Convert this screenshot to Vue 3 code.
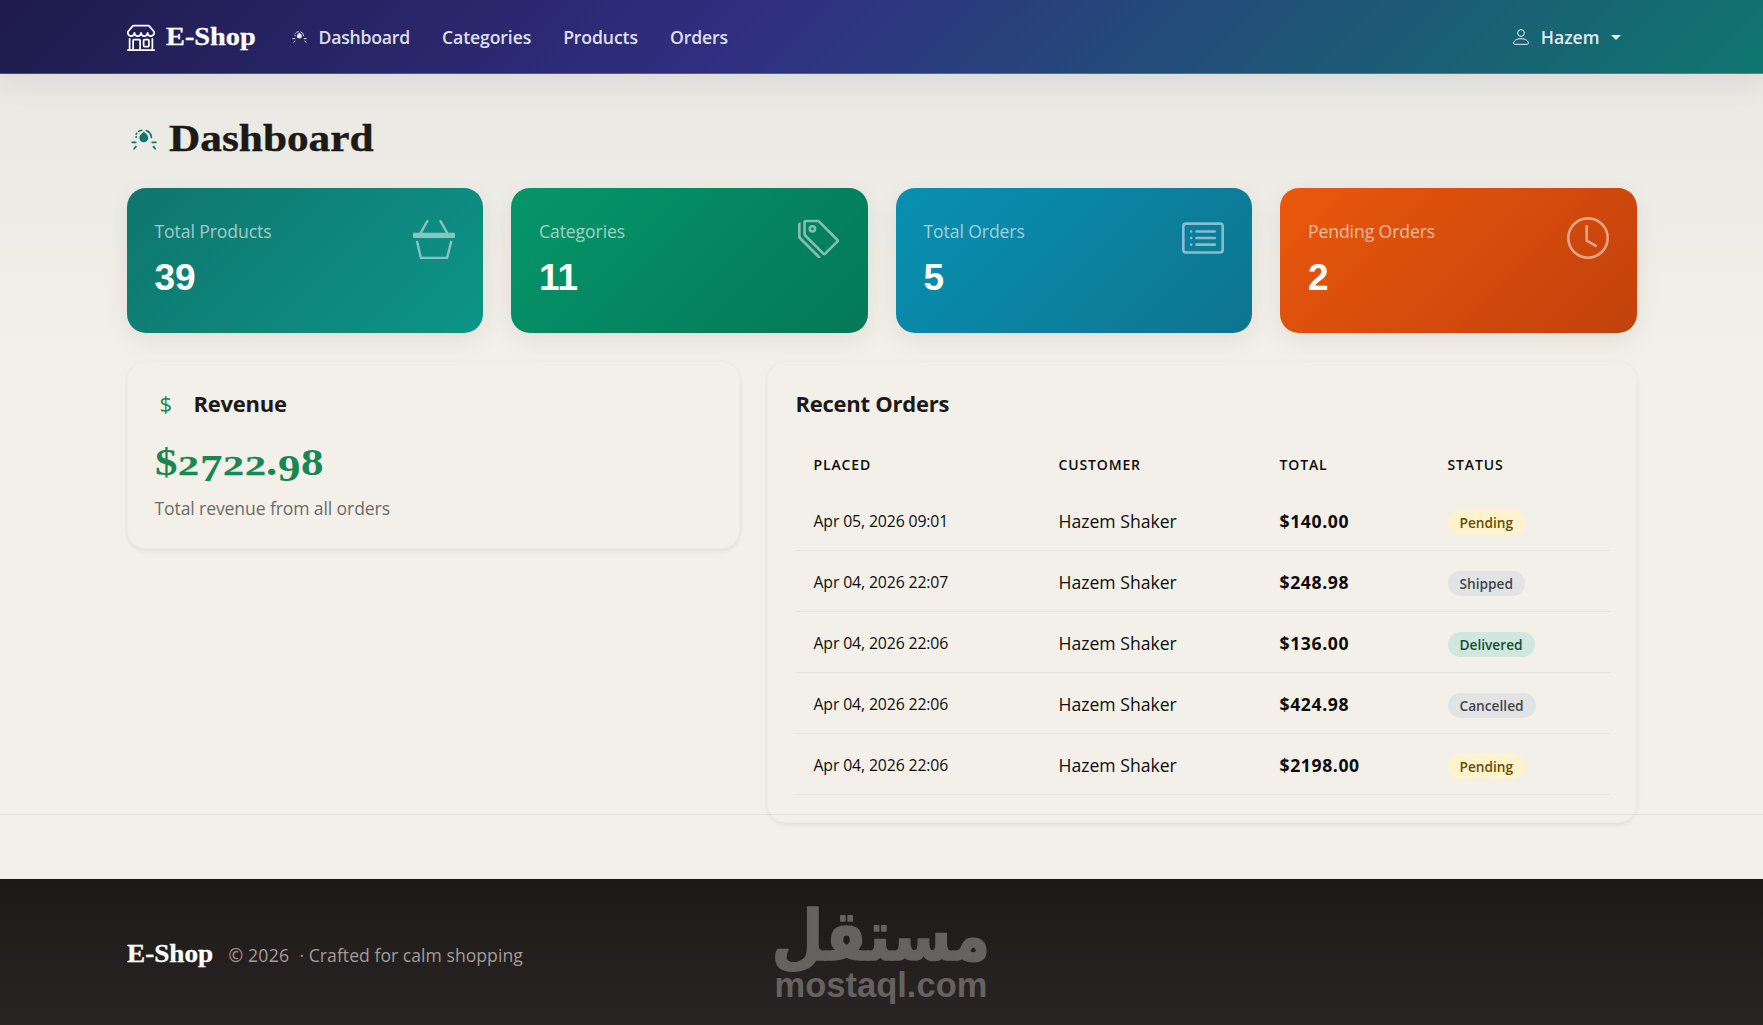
<template>
  <div class="page">
    <header class="navbar">
      <div class="container navbar__inner">
        <a class="brand" href="#">
          <svg class="brand__icon" viewBox="0 0 16 16" fill="currentColor">
            <path d="M2.97 1.35A1 1 0 0 1 3.73 1h8.54a1 1 0 0 1 .76.35l2.609 3.044A1.5 1.5 0 0 1 16 5.37v.255a2.375 2.375 0 0 1-4.25 1.458A2.371 2.371 0 0 1 9.875 8 2.37 2.37 0 0 1 8 7.083 2.37 2.37 0 0 1 6.125 8a2.37 2.37 0 0 1-1.875-.917A2.375 2.375 0 0 1 0 5.625V5.37a1.5 1.5 0 0 1 .361-.976zm1.78 4.275a1.375 1.375 0 0 0 2.75 0 .5.5 0 0 1 1 0 1.375 1.375 0 0 0 2.75 0 .5.5 0 0 1 1 0 1.375 1.375 0 1 0 2.75 0V5.37a.5.5 0 0 0-.12-.325L12.27 2H3.73L1.12 5.045A.5.5 0 0 0 1 5.37v.255a1.375 1.375 0 0 0 2.75 0 .5.5 0 0 1 1 0M1.5 8.5A.5.5 0 0 1 2 9v6h1v-5a1 1 0 0 1 1-1h3a1 1 0 0 1 1 1v5h6V9a.5.5 0 0 1 1 0v6h.5a.5.5 0 0 1 0 1H.5a.5.5 0 0 1 0-1H1V9a.5.5 0 0 1 .5-.5M4 15h3v-5H4zm5-5a1 1 0 0 1 1-1h2a1 1 0 0 1 1 1v3a1 1 0 0 1-1 1h-2a1 1 0 0 1-1-1zm3 0h-2v3h2z" />
          </svg>
          <span class="brand__name">E-Shop</span>
        </a>

        <nav class="nav">
          <a v-for="link in links" :key="link.label" class="nav__link" href="#">
            <svg v-if="link.icon" class="nav__icon" viewBox="0 0 26 21">
              <g fill="none" stroke="currentColor" stroke-width="1.7" stroke-linecap="round">
                <path d="M5.2 8.2v-.6M5.2 5l.6-.7M7.8 2.2l2.8-.9M15.4 1.6a8 8 0 0 1 5 6.8M1.2 13.3h3.6M21.2 13.3h3.6M4.9 17.6l-1.8 2.2M22.4 17.6l1.8 2.2" />
              </g>
              <path d="M12.8 2.6c1 1.6 4.4 3 4.4 6.3a4.4 4.4 0 0 1-8.8 0c0-3.3 3.4-4.7 4.4-6.3z" fill="currentColor" />
            </svg>
            <span>{{ link.label }}</span>
          </a>
        </nav>

        <button class="user" type="button">
          <svg class="user__icon" viewBox="0 0 16 16" fill="none" stroke="currentColor">
            <circle cx="8" cy="4" r="3.4" />
            <path d="M.6 14.2C.6 12.2 3 9.7 8 9.7s7.4 2.5 7.4 4.5c0 .7-.4 1.1-1 1.1H1.6c-.6 0-1-.4-1-1.1z" />
          </svg>
          <span>Hazem</span>
          <i class="user__caret"></i>
        </button>
      </div>
    </header>

    <main class="main">
      <div class="container">
        <h1 class="title">
          <svg class="title__icon" viewBox="0 0 26 21">
            <g fill="none" stroke="currentColor" stroke-width="1.7" stroke-linecap="round">
              <path d="M5.2 8.2v-.6M5.2 5l.6-.7M7.8 2.2l2.8-.9M15.4 1.6a8 8 0 0 1 5 6.8M1.2 13.3h3.6M21.2 13.3h3.6M4.9 17.6l-1.8 2.2M22.4 17.6l1.8 2.2" />
            </g>
            <path d="M12.8 2.6c1 1.6 4.4 3 4.4 6.3a4.4 4.4 0 0 1-8.8 0c0-3.3 3.4-4.7 4.4-6.3z" fill="currentColor" />
          </svg>
          <span class="title__text">Dashboard</span>
        </h1>

        <section class="stats">
          <article v-for="stat in stats" :key="stat.label" class="stat" :class="`stat--${stat.icon}`">
            <div>
              <div class="stat__label">{{ stat.label }}</div>
              <div class="stat__value">{{ stat.value }}</div>
            </div>
            <svg v-if="stat.icon === 'basket'" class="stat__icon" viewBox="0 0 16 16" fill="none" stroke="currentColor">
              <path d="M5.5 1.5 2.9 6.2M10.4 1.5 13.1 6.2" stroke-width=".9" stroke-linecap="round" />
              <rect y="6" width="16" height="2" rx=".3" fill="currentColor" stroke="none" />
              <path d="M1.5 9.1 3 15.6h10l1.6-6.5" stroke-width=".9" />
            </svg>
            <svg v-else-if="stat.icon === 'tags'" class="stat__icon" viewBox="0 0 16 16" fill="currentColor">
              <path d="M3 2v4.586l7 7L14.586 9l-7-7zM2 2a1 1 0 0 1 1-1h4.586a1 1 0 0 1 .707.293l7 7a1 1 0 0 1 0 1.414l-4.586 4.586a1 1 0 0 1-1.414 0l-7-7A1 1 0 0 1 2 6.586z" />
              <path d="M5.5 5a.5.5 0 1 1 0-1 .5.5 0 0 1 0 1m0 1a1.5 1.5 0 1 0 0-3 1.5 1.5 0 0 0 0 3M1 7.086a1 1 0 0 0 .293.707L8.75 15.25l-.043.043a1 1 0 0 1-1.414 0l-7-7A1 1 0 0 1 0 7.586V3a1 1 0 0 1 1-1z" />
            </svg>
            <svg v-else-if="stat.icon === 'list'" class="stat__icon" viewBox="0 0 16 16" fill="none" stroke="currentColor">
              <rect x=".5" y="2.5" width="15" height="11" rx="1" />
              <path d="M5.5 5.5h7M5.5 8h7M5.5 10.5h7" stroke-linecap="round" />
              <path d="M3.5 5.5h.01M3.5 8h.01M3.5 10.5h.01" stroke-linecap="round" />
            </svg>
            <svg v-else class="stat__icon" viewBox="0 0 16 16" fill="none" stroke="currentColor">
              <circle cx="8" cy="8" r="7.5" />
              <path d="M7.5 3.5V9l3.5 2" stroke-linecap="round" stroke-linejoin="round" />
            </svg>
          </article>
        </section>

        <section class="panels">
          <article class="panel">
            <h2 class="panel__title">
              <span class="panel__dollar">$</span>
              <span>Revenue</span>
            </h2>
            <div class="revenue">
              <span v-for="(char, i) in revenue" :key="i" class="fig" :class="figures[char]">{{ char }}</span>
            </div>
            <p class="panel__note">Total revenue from all orders</p>
          </article>

          <article class="panel panel--orders">
            <h2 class="panel__title">Recent Orders</h2>
            <table class="orders">
              <colgroup>
                <col class="orders__placed" />
                <col class="orders__customer" />
                <col class="orders__total" />
                <col />
              </colgroup>
              <thead>
                <tr>
                  <th>Placed</th>
                  <th>Customer</th>
                  <th>Total</th>
                  <th>Status</th>
                </tr>
              </thead>
              <tbody>
                <tr v-for="(order, i) in orders" :key="i">
                  <td class="date">{{ order.placed }}</td>
                  <td>{{ order.customer }}</td>
                  <td class="amount">{{ order.total }}</td>
                  <td>
                    <span class="badge" :class="`badge--${order.status.toLowerCase()}`">{{ order.status }}</span>
                  </td>
                </tr>
              </tbody>
            </table>
          </article>
        </section>
      </div>
    </main>

    <footer class="footer">
      <div class="container footer__inner">
        <span class="footer__brand"><span class="footer__name">E-Shop</span></span>
        <span class="footer__year">© 2026</span>
        <span class="footer__text">· Crafted for calm shopping</span>
      </div>
      <svg class="mostaql" viewBox="0 0 216 96">
        <text class="mostaql__ar" transform="translate(108 54) scale(0.88 1.03)" text-anchor="middle">مستقل</text>
        <text class="mostaql__en" x="108" y="91" text-anchor="middle">mostaql.com</text>
      </svg>
    </footer>
  </div>
</template>

<script setup>
const links = [
  { label: 'Dashboard', icon: true },
  { label: 'Categories' },
  { label: 'Products' },
  { label: 'Orders' },
]

const stats = [
  { label: 'Total Products', value: 39, icon: 'basket' },
  { label: 'Categories', value: 11, icon: 'tags' },
  { label: 'Total Orders', value: 5, icon: 'list' },
  { label: 'Pending Orders', value: 2, icon: 'clock' },
]

const revenue = '$2722.98'

// old-style figures: 2 sits at x-height, 7 and 9 drop below the baseline
const figures = {
  2: 'fig--small',
  7: 'fig--low',
  9: 'fig--low',
  '.': 'fig--dot',
}

const orders = [
  { placed: 'Apr 05, 2026 09:01', customer: 'Hazem Shaker', total: '$140.00', status: 'Pending' },
  { placed: 'Apr 04, 2026 22:07', customer: 'Hazem Shaker', total: '$248.98', status: 'Shipped' },
  { placed: 'Apr 04, 2026 22:06', customer: 'Hazem Shaker', total: '$136.00', status: 'Delivered' },
  { placed: 'Apr 04, 2026 22:06', customer: 'Hazem Shaker', total: '$424.98', status: 'Cancelled' },
  { placed: 'Apr 04, 2026 22:06', customer: 'Hazem Shaker', total: '$2198.00', status: 'Pending' },
]
</script>

<style>
body {
  margin: 0;
  background: #f3f0e9;
}
</style>

<style scoped>
.page {
  display: flex;
  flex-direction: column;
  height: 1025px;
  overflow: hidden;
  box-sizing: border-box;
  background: linear-gradient(180deg, #e8e7e3 0, #e9e8e3 74px, #f3f0e9 350px);
  color: #1c1917;
  font-family: "Open Sans", "Noto Sans", sans-serif;
  font-size: 17.6px;
}

.container {
  width: 1510px;
  margin: 0 auto;
}

.navbar {
  position: relative;
  flex: none;
  height: 73px;
  border-bottom: 1px solid rgba(255, 255, 255, 0.2);
  background: linear-gradient(135deg, #1e1b4b 0%, #312e81 42%, #0f766e 100%) border-box;
  box-shadow: 0 8px 32px rgba(28, 25, 23, 0.07);
}

.navbar__inner {
  display: flex;
  align-items: center;
  height: 74px;
}

.brand {
  display: flex;
  align-items: center;
  width: 165px;
  gap: 11px;
  color: #fff;
  text-decoration: none;
}

.brand__icon {
  width: 28px;
  height: 28px;
}

.brand__name {
  font-family: "Liberation Serif", serif;
  font-size: 26px;
  font-weight: 700;
  line-height: 30px;
  transform: scaleX(1.09);
  transform-origin: left;
  -webkit-text-stroke: 0.3px currentColor;
}

.nav {
  display: flex;
  align-items: center;
  flex: 1;
  gap: 32px;
}

.nav__link {
  display: flex;
  align-items: center;
  gap: 12px;
  color: rgba(255, 255, 255, 0.87);
  font-weight: 600;
  letter-spacing: -0.1px;
  text-decoration: none;
}

.nav__link:first-child {
  letter-spacing: -0.2px;
}

.nav__icon {
  width: 15px;
  height: 12px;
}

.user {
  display: flex;
  align-items: center;
  margin-right: 16px;
  padding: 0;
  border: 0;
  background: none;
  color: rgba(255, 255, 255, 0.9);
  font: inherit;
  font-weight: 600;
}

.user__icon {
  width: 16px;
  height: 16px;
  margin-right: 12px;
}

.user__caret {
  margin-left: 11px;
  border: 5.5px solid transparent;
  border-top-color: currentColor;
  border-bottom: 0;
}

.main {
  flex: none;
  height: 740px;
  border-bottom: 1px solid #e4e0d9;
}

.title {
  display: flex;
  align-items: center;
  height: 114px;
  margin: 0;
  padding: 13px 0 0 4px;
  box-sizing: border-box;
  gap: 12px;
  font-family: "Liberation Serif", serif;
  font-size: 38.5px;
  line-height: 50px;
}

.title__icon {
  width: 26px;
  height: 21px;
  margin-top: 4px;
  color: #0f766e;
}

.title__text {
  transform: scaleX(1.125);
  transform-origin: left;
  -webkit-text-stroke: 0.4px currentColor;
}

.stats {
  display: grid;
  grid-template-columns: repeat(4, 1fr);
  gap: 28px;
}

.stat {
  display: flex;
  justify-content: space-between;
  height: 145px;
  padding: 28px;
  box-sizing: border-box;
  border-radius: 19px;
  color: #fff;
  box-shadow: 0 8px 26px rgba(28, 25, 23, 0.07);
}

.stat--basket {
  background: linear-gradient(135deg, #0f766e, #0d9488);
}

.stat--tags {
  background: linear-gradient(135deg, #059669, #047857);
}

.stat--list {
  background: linear-gradient(135deg, #0891b2, #0e7490);
}

.stat--clock {
  background: linear-gradient(135deg, #ea580c, #c2410c);
}

.stat__label {
  color: rgba(255, 255, 255, 0.62);
  line-height: 31px;
  letter-spacing: -0.1px;
}

.stat__value {
  font-family: "Liberation Sans", Arial, sans-serif;
  font-size: 37px;
  font-weight: 700;
  line-height: 61px;
}

.stat__icon {
  width: 42px;
  height: 42px;
  margin-top: 0.5px;
  opacity: 0.5;
}

.panels {
  display: grid;
  grid-template-columns: 613px 1fr;
  align-items: start;
  gap: 27px;
  margin-top: 28px;
}

.panel {
  height: 188px;
  padding: 26px 27px;
  box-sizing: border-box;
  border: 1px solid rgba(28, 25, 23, 0.025);
  border-radius: 19px;
  box-shadow: 0 2px 4px rgba(28, 25, 23, 0.08);
}

.panel--orders {
  height: 462px;
  padding-right: 26px;
  padding-left: 28px;
}

.panel__title {
  display: flex;
  margin: 0;
  font-size: 22px;
  font-weight: 700;
  line-height: 31px;
  letter-spacing: -0.25px;
}

.panel__dollar {
  width: 34px;
  padding-left: 5px;
  color: #198754;
  font-weight: 400;
}

.revenue {
  display: flex;
  align-items: baseline;
  height: 58px;
  margin-top: 15px;
  color: #198754;
  font-family: "Liberation Serif", serif;
  font-size: 37.5px;
  font-weight: 700;
  line-height: 58px;
}

.fig {
  width: 23.5px;
  transform: scaleX(1.2);
  transform-origin: left;
}

.fig--small {
  width: 21.5px;
  font-size: 28px;
  transform: scaleX(1.5);
  -webkit-text-stroke: 0.3px currentColor;
}

.fig--low {
  position: relative;
  top: 6px;
}

.fig--dot {
  width: 11.5px;
}

.panel__note {
  margin: 3px 0 0;
  color: #6d6b68;
  line-height: 27px;
  letter-spacing: -0.12px;
}

.orders {
  width: 814px;
  margin-top: 12px;
  border-collapse: collapse;
  table-layout: fixed;
  color: #0d0c0b;
}

.orders__placed {
  width: 245px;
}

.orders__customer {
  width: 221px;
}

.orders__total {
  width: 168px;
}

.orders th {
  height: 52px;
  padding: 7px 0 0 18px;
  font-size: 14px;
  font-weight: 600;
  letter-spacing: 0.85px;
  text-align: left;
  text-transform: uppercase;
}

.orders td {
  height: 60.9px;
  padding: 1px 0 0 18px;
  box-sizing: border-box;
  border-bottom: 1px solid #e7e4de;
}

.orders .date {
  font-size: 15.8px;
  letter-spacing: -0.13px;
}

.orders .amount {
  font-weight: 700;
  letter-spacing: 0.6px;
}

.badge {
  display: inline-block;
  position: relative;
  top: 1px;
  padding: 0 12px;
  border-radius: 13px;
  font-size: 13.7px;
  font-weight: 600;
  line-height: 25px;
}

.badge--pending {
  background: #fff3cd;
  color: #664d03;
}

.badge--shipped,
.badge--cancelled {
  background: #e2e3e5;
  color: #41464b;
}

.badge--delivered {
  background: #d1e7dd;
  color: #0f5132;
}

.footer {
  position: relative;
  flex: none;
  height: 147px;
  margin-top: 64px;
  box-sizing: border-box;
  background: linear-gradient(180deg, #1c1917, #292524);
}

.footer__inner {
  display: flex;
  align-items: baseline;
  padding-top: 61px;
  color: #a29d97;
}

.footer__brand {
  width: 102px;
  color: #fff;
  font-family: "Liberation Serif", serif;
  font-size: 24.5px;
  font-weight: 700;
}

.footer__name {
  display: inline-block;
  transform: scaleX(1.11);
  transform-origin: left;
  -webkit-text-stroke: 0.3px currentColor;
}

.footer__year {
  width: 71px;
  letter-spacing: 0.2px;
}

.footer__text {
  letter-spacing: 0.03px;
}

.mostaql {
  position: absolute;
  top: 27px;
  left: 773px;
  width: 216px;
  height: 96px;
  overflow: visible;
  fill: #656260;
}

.mostaql__ar {
  font-family: "DejaVu Sans", sans-serif;
  font-size: 68px;
  font-weight: 700;
  stroke: #656260;
  stroke-width: 1.5px;
  stroke-linejoin: round;
}

.mostaql__en {
  font-family: "Liberation Sans", Arial, sans-serif;
  font-size: 34.5px;
  font-weight: 700;
}
</style>
